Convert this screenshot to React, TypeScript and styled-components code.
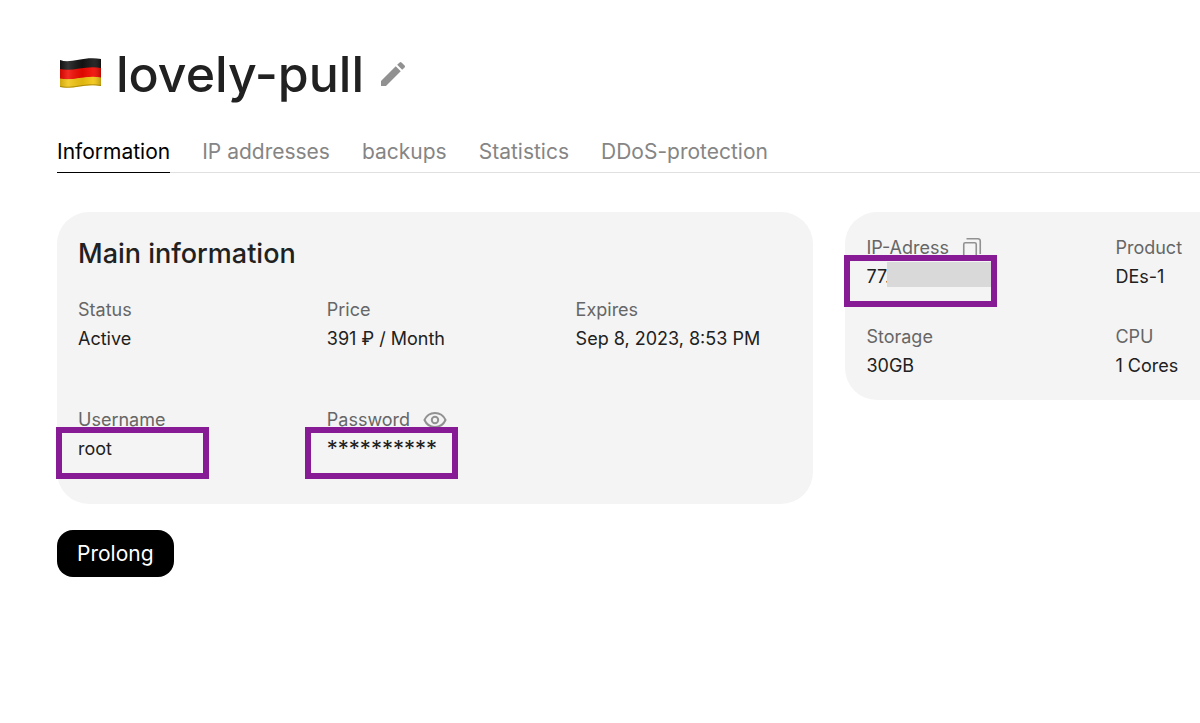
import React from 'react';
import styled, { createGlobalStyle } from 'styled-components';

const GlobalStyle = createGlobalStyle`
  *, *::before, *::after { box-sizing: border-box; }
  body {
    margin: 0;
    background: #fff;
    color: #212121;
    font-family: Inter, "Liberation Sans", sans-serif;
  }
`;

const Page = styled.main`
  padding: 45px 0 45px 57px;
`;

const Header = styled.header`
  display: flex;
  align-items: center;
`;

const Title = styled.h1`
  margin: 0 13px 0 15px;
  font-size: 50px;
  line-height: 58px;
  font-weight: 500;
`;

const IconButton = styled.button`
  display: inline-flex;
  padding: 0;
  border: 0;
  background: none;
  color: #919191;
  cursor: pointer;
`;

const Tabs = styled.nav`
  display: flex;
  gap: 32px;
  margin-top: 33px;
  border-bottom: 1px solid #e0e0e0;
`;

const Tab = styled.a<{ $active?: boolean }>`
  margin-bottom: -1px;
  padding-bottom: 4px;
  border-bottom: 1px solid ${(p) => (p.$active ? '#000' : 'transparent')};
  color: ${(p) => (p.$active ? '#000' : '#858585')};
  font-size: 21px;
  line-height: 32px;
  text-decoration: none;
  white-space: nowrap;
`;

const Panels = styled.div`
  display: grid;
  grid-template-columns: minmax(0, 32fr) minmax(0, 15fr);
  align-items: start;
  gap: 32px;
  margin-top: 39px;
`;

const Card = styled.section<{ $bleed?: boolean }>`
  padding: ${(p) => (p.$bleed ? '21px 0 20px 21px' : '21px 21px 20px')};
  border-radius: ${(p) => (p.$bleed ? '32px 0 0 32px' : '32px')};
  background: #f4f4f4;
`;

const CardTitle = styled.h2`
  margin: 0 0 20px;
  font-size: 27px;
  line-height: 42px;
  font-weight: 500;
`;

const Fields = styled.dl<{ $columns: string }>`
  display: grid;
  grid-template-columns: ${(p) => p.$columns};
  gap: 31px 32px;
  margin: 0;
`;

const Field = styled.div<{ $roomy?: boolean }>`
  padding-bottom: ${(p) => (p.$roomy ? '21px' : '0')};
  font-size: 18px;
  white-space: nowrap;
`;

const Label = styled.dt`
  display: flex;
  align-items: center;
  gap: 13px;
  height: 29px;
  color: #666;
`;

const Value = styled.dd`
  position: relative;
  height: 29px;
  margin: 0;
  line-height: 29px;
`;

const Mask = styled.span`
  font-size: 22px;
`;

const Redaction = styled.span`
  position: absolute;
  top: 0;
  left: 21px;
  width: 108px;
  height: 25px;
  background: #d9d9d9;
`;

const Highlight = styled.span`
  position: absolute;
  top: -7px;
  left: -22px;
  width: 153px;
  height: 52px;
  border: 6px solid #871b96;
  pointer-events: none;
`;

const PrimaryButton = styled.button`
  margin-top: 26px;
  padding: 0 20px;
  border: 0;
  border-radius: 16px;
  background: #000;
  color: #fff;
  font-family: inherit;
  font-size: 21px;
  line-height: 47px;
  cursor: pointer;
`;

const GermanFlag = () => (
  <svg width="44" height="32" viewBox="0 0 44 32" role="img" aria-label="Germany">
    <defs>
      <linearGradient id="wave" x1="0" x2="1" y1="0" y2="0">
        <stop offset="0" stopColor="#000" stopOpacity="0.15" />
        <stop offset="0.2" stopColor="#fff" stopOpacity="0.14" />
        <stop offset="0.55" stopColor="#000" stopOpacity="0.08" />
        <stop offset="0.8" stopColor="#fff" stopOpacity="0.08" />
        <stop offset="1" stopColor="#000" stopOpacity="0.22" />
      </linearGradient>
    </defs>
    <path d="M3 2C14 6 26-2 44 1V11C28 8 16 15 3 12Z" fill="#141414" />
    <path d="M3 11C16 14 28 7 44 10V20C28 17 16 24 3 21Z" fill="#f00800" />
    <path d="M3 20.500C16 23.500 28 16.500 44 19.500V28C28 25 16 32 3 29Z" fill="#f2c511" />
    <path d="M3 2C14 6 26-2 44 1V28C28 25 16 32 3 29Z" fill="url(#wave)" />
    <path d="M3 28.500C16 31.500 28 24.500 44 27.500" fill="none" stroke="#8a6a00" strokeOpacity="0.6" />
  </svg>
);

const PencilIcon = () => (
  <svg width="32" height="32" viewBox="0 0 24 24" fill="currentColor" aria-hidden="true">
    <path d="M3 17.250V21h3.750L17.810 9.940l-3.750-3.750L3 17.250zM20.710 7.040a1 1 0 0 0 0-1.410l-2.340-2.340a1 1 0 0 0-1.410 0l-1.830 1.830 3.750 3.750 1.830-1.830z" />
  </svg>
);

const CopyIcon = () => (
  <svg width="20" height="22" viewBox="0 0 20 22" fill="none" stroke="currentColor" strokeWidth="1.600" aria-hidden="true">
    <rect x="1.750" y="5.750" width="12.500" height="15" rx="1.500" />
    <path d="M4.500 1.750H16A2.250 2.250 0 0 1 18.250 4V17" />
  </svg>
);

const EyeIcon = () => (
  <svg width="24" height="18" viewBox="0 0 24 18" fill="none" stroke="currentColor" strokeWidth="2" aria-hidden="true">
    <path d="M1.500 9C3.500 4.500 7.300 2 12 2S20.500 4.500 22.500 9C20.500 13.500 16.700 16 12 16S3.500 13.500 1.500 9Z" />
    <circle cx="12" cy="9" r="3.200" />
  </svg>
);

const tabs = ['Information', 'IP addresses', 'backups', 'Statistics', 'DDoS-protection'];

export default function App() {
  return (
    <>
      <GlobalStyle />
      <Page>
        <Header>
          <GermanFlag />
          <Title>lovely-pull</Title>
          <IconButton type="button" aria-label="Rename server">
            <PencilIcon />
          </IconButton>
        </Header>
        <Tabs>
          {tabs.map((tab, i) => (
            <Tab key={tab} href="#" $active={i === 0}>
              {tab}
            </Tab>
          ))}
        </Tabs>
        <Panels>
          <Card>
            <CardTitle>Main information</CardTitle>
            <Fields $columns="repeat(3, minmax(0, 1fr))">
              <Field $roomy>
                <Label>Status</Label>
                <Value>Active</Value>
              </Field>
              <Field $roomy>
                <Label>Price</Label>
                <Value>391 ₽ / Month</Value>
              </Field>
              <Field $roomy>
                <Label>Expires</Label>
                <Value>Sep 8, 2023, 8:53 PM</Value>
              </Field>
              <Field $roomy>
                <Label>Username</Label>
                <Value>
                  root
                  <Highlight />
                </Value>
              </Field>
              <Field $roomy>
                <Label>
                  Password
                  <IconButton type="button" aria-label="Show password">
                    <EyeIcon />
                  </IconButton>
                </Label>
                <Value>
                  <Mask>**********</Mask>
                  <Highlight />
                </Value>
              </Field>
            </Fields>
          </Card>
          <Card $bleed>
            <Fields $columns="217px minmax(0, 1fr)">
              <Field>
                <Label>
                  IP-Adress
                  <IconButton type="button" aria-label="Copy IP address">
                    <CopyIcon />
                  </IconButton>
                </Label>
                <Value>
                  77.
                  <Redaction />
                  <Highlight />
                </Value>
              </Field>
              <Field>
                <Label>Product</Label>
                <Value>DEs-1</Value>
              </Field>
              <Field>
                <Label>Storage</Label>
                <Value>30GB</Value>
              </Field>
              <Field>
                <Label>CPU</Label>
                <Value>1 Cores</Value>
              </Field>
            </Fields>
          </Card>
        </Panels>
        <PrimaryButton type="button">Prolong</PrimaryButton>
      </Page>
    </>
  );
}
